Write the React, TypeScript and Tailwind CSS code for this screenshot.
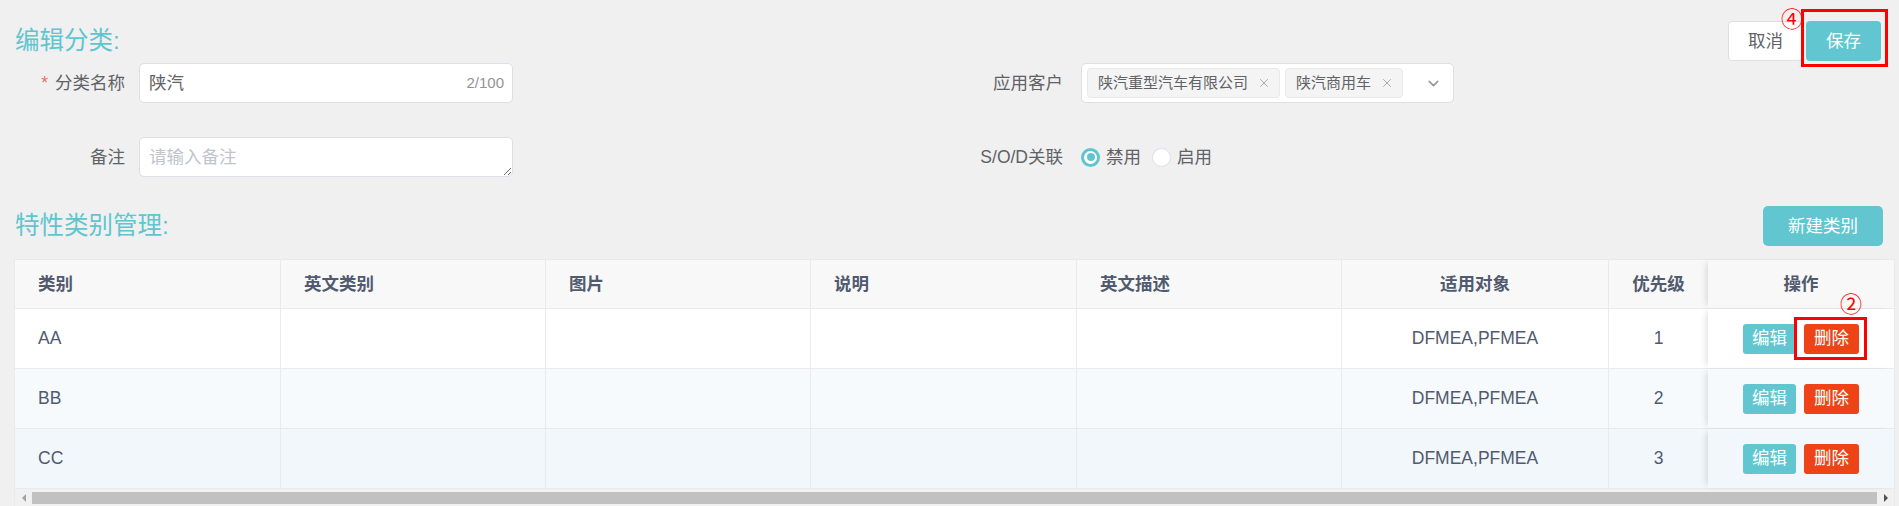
import { ChevronDown, X } from "lucide-react";

const rows = [
  { name: "AA", target: "DFMEA,PFMEA", level: 1, bg: "bg-white" },
  { name: "BB", target: "DFMEA,PFMEA", level: 2, bg: "bg-[#f7fafd]" },
  { name: "CC", target: "DFMEA,PFMEA", level: 3, bg: "bg-[#f2f7fc]" },
];

const grid =
  "grid grid-cols-[266px_265px_265px_266px_265px_267px_99px_1fr]";

const Radio = ({ checked, label }: { checked?: boolean; label: string }) => (
  <label className="flex items-center">
    {checked ? (
      <span className="flex h-[19px] w-[19px] items-center justify-center rounded-full border-[3px] border-[#60c5cf] bg-white">
        <span className="h-[8px] w-[8px] rounded-full bg-[#60c5cf]" />
      </span>
    ) : (
      <span className="h-[19px] w-[19px] rounded-full border border-[#dcdfe6] bg-white" />
    )}
    <span className="ml-[6px]">{label}</span>
  </label>
);

const Tag = ({ text }: { text: string }) => (
  <span className="flex h-[30px] items-center gap-[9px] rounded-[4px] border border-[#e9e9eb] bg-[#f4f4f5] pr-[8px] pl-[10px] text-[15px] text-[#606266]">
    {text}
    <X size={14} strokeWidth={1.3} className="text-[#909399]" />
  </span>
);

const App = () => {
  return (
    <div className="h-[506px] w-full overflow-hidden bg-[#f0f0f0] pt-[21px] font-['Liberation_Sans','Noto_Sans_CJK_SC',sans-serif] text-[17.5px] text-[#606266]">
      {/* Header */}
      <div className="flex h-10 items-center justify-between pl-[15px] pr-[18px]">
        <h1 className="text-[24.5px] leading-none text-[#60c5cf]">编辑分类:</h1>
        <div className="flex gap-[3px]">
          <button className="h-10 w-[75px] rounded-[4px] border border-[#dcdfe6] bg-white">
            取消
          </button>
          <span className="relative">
            <button className="h-10 w-[75px] rounded-[4px] bg-[#62c6d0] text-white">
              保存
            </button>
            <span className="absolute -top-[12px] -right-[7px] -bottom-[6px] -left-[5px] border-[3px] border-[#ff0000]" />
            <span className="absolute -top-[12px] -left-[25px] text-[22px] leading-none text-[#ff0000]">
              ④
            </span>
          </span>
        </div>
      </div>

      {/* Form */}
      <div className="mt-[2px] grid grid-cols-[942px_1fr] gap-y-[34px]">
        <div className="flex h-10 items-center">
          <span className="w-[139px] pr-[14px] text-right">
            <span className="mr-[7px] text-[#f56c6c]">*</span>分类名称
          </span>
          <div className="flex h-10 w-[374px] items-center rounded-[5px] border border-[#dcdfe6] bg-white pl-[9px] pr-[8px]">
            <input
              readOnly
              value="陕汽"
              className="min-w-0 flex-1 bg-transparent text-[#606266] outline-none"
            />
            <span className="text-[15px] text-[#909399]">2/100</span>
          </div>
        </div>
        <div className="flex h-10 items-center">
          <span className="w-[139px] pr-[18px] text-right">应用客户</span>
          <div className="flex h-10 w-[373px] items-center gap-[5px] rounded-[5px] border border-[#dcdfe6] bg-white pl-[5px]">
            <Tag text="陕汽重型汽车有限公司" />
            <Tag text="陕汽商用车" />
            <ChevronDown size={17} strokeWidth={2} className="mr-[11px] ml-auto text-[#909399]" />
          </div>
        </div>
        <div className="flex h-10 items-center">
          <span className="w-[139px] pr-[14px] text-right">备注</span>
          <textarea
            placeholder="请输入备注"
            className="h-10 w-[374px] resize-y rounded-[5px] border border-[#dcdfe6] bg-white px-[9px] py-[6px] leading-[26px] outline-none placeholder:text-[#c0c4cc]"
          />
        </div>
        <div className="flex h-10 items-center">
          <span className="w-[139px] pr-[18px] text-right">S/O/D关联</span>
          <div className="flex items-center gap-[11px]">
            <Radio checked label="禁用" />
            <Radio label="启用" />
          </div>
        </div>
      </div>

      {/* Section header */}
      <div className="mt-[29px] flex h-10 items-center justify-between pl-[15px] pr-[16px]">
        <h2 className="text-[24.5px] leading-none text-[#60c5cf]">特性类别管理:</h2>
        <button className="h-10 w-[120px] rounded-[5px] bg-[#62c6d0] text-white">新建类别</button>
      </div>

      {/* Table */}
      <div className="mt-[13px] mr-[4px] ml-[14px] border border-[#e8eaec] bg-white text-[#515a6e]">
        <div className={`${grid} h-[49px] border-b border-[#e8eaec] bg-[#f8f8f9] font-bold`}>
          {["类别", "英文类别", "图片", "说明", "英文描述"].map((t) => (
            <div key={t} className="flex items-center border-r border-[#e8eaec] pl-[23px]">
              {t}
            </div>
          ))}
          <div className="flex items-center justify-center border-r border-[#e8eaec]">适用对象</div>
          <div className="flex items-center justify-center">优先级</div>
          <div className="relative z-10 flex items-center justify-center bg-[#f8f8f9] shadow-[-5px_0_6px_-3px_rgba(0,0,0,0.12)]">
            操作
          </div>
        </div>
        {rows.map((r, i) => (
          <div key={r.name} className={`${grid} h-[60px] border-b border-[#e8eaec] ${r.bg}`}>
            <div className="flex items-center border-r border-[#e8eaec] pl-[23px]">{r.name}</div>
            <div className="border-r border-[#e8eaec]" />
            <div className="border-r border-[#e8eaec]" />
            <div className="border-r border-[#e8eaec]" />
            <div className="border-r border-[#e8eaec]" />
            <div className="flex items-center justify-center border-r border-[#e8eaec]">{r.target}</div>
            <div className="flex items-center justify-center">{r.level}</div>
            <div
              className={`relative z-10 flex items-center justify-center gap-[8px] shadow-[-5px_0_6px_-3px_rgba(0,0,0,0.12)] ${r.bg}`}
            >
              <button className="h-[30px] w-[53px] rounded-[3px] bg-[#62c6d0] text-white">编辑</button>
              <span className="relative">
                <button className="h-[30px] w-[55px] rounded-[3px] bg-[#ee4316] text-white">删除</button>
                {i === 0 && (
                  <>
                    <span className="absolute -top-[7px] -right-[8px] -bottom-[6px] -left-[10px] border-[3px] border-[#ff0000]" />
                    <span className="absolute -top-[30px] left-[36px] text-[22px] leading-none text-[#ff0000]">
                      ②
                    </span>
                  </>
                )}
              </span>
            </div>
          </div>
        ))}
        {/* Horizontal scrollbar */}
        <div className="flex h-[17px] items-center bg-[#f1f1f1]">
          <div className="flex w-[17px] justify-center">
            <span className="h-0 w-0 border-y-[4px] border-r-[4px] border-y-transparent border-r-[#a3a3a3]" />
          </div>
          <div className="h-[12px] flex-1 bg-[#c1c1c1]" />
          <div className="flex w-[17px] justify-center">
            <span className="h-0 w-0 border-y-[4px] border-l-[4px] border-y-transparent border-l-[#505050]" />
          </div>
        </div>
      </div>
    </div>
  );
};

export default App;
